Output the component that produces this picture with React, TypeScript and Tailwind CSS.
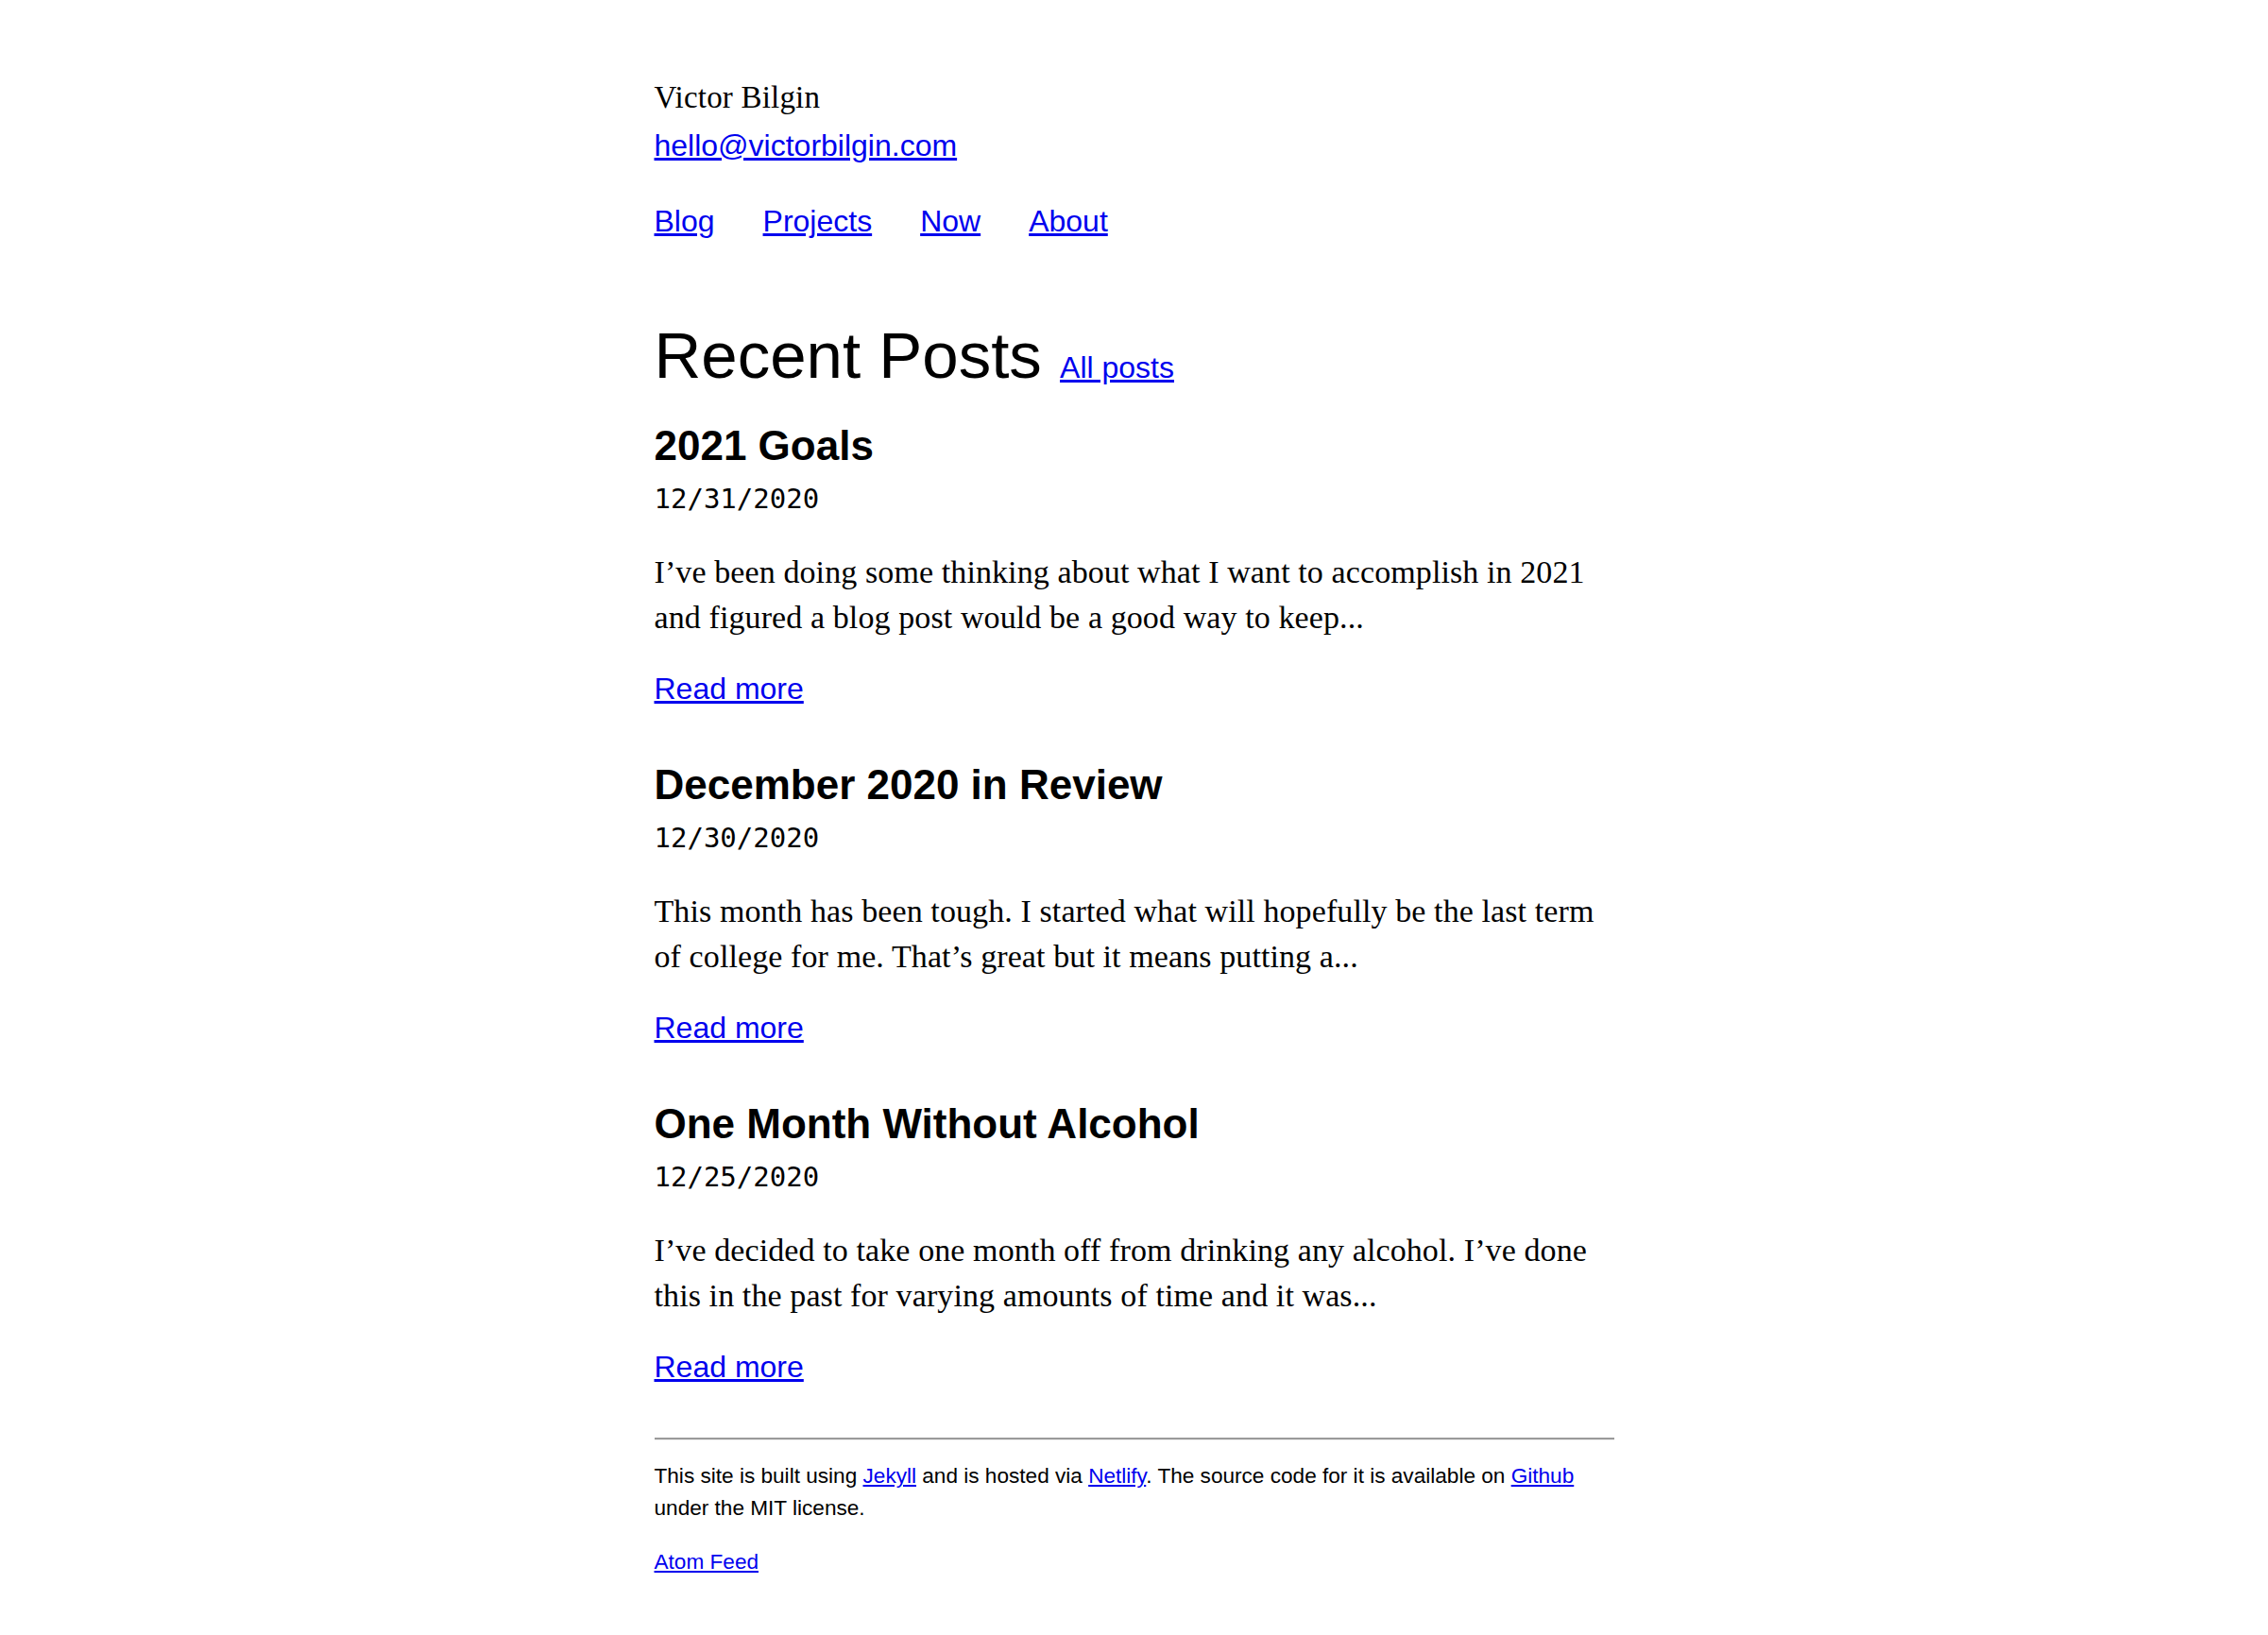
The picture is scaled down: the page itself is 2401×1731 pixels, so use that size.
const serif = "font-['Liberation_Serif',serif]";
const sans = "font-['Liberation_Sans',Arial,sans-serif]";
const mono = "font-['DejaVu_Sans_Mono',monospace]";
const link = "text-[#0000ee] underline";

type Post = { title: string; date: string; excerpt: string };

const posts: Post[] = [
  {
    title: '2021 Goals',
    date: '12/31/2020',
    excerpt:
      'I\u2019ve been doing some thinking about what I want to accomplish in 2021 and figured a blog post would be a good way to keep...',
  },
  {
    title: 'December 2020 in Review',
    date: '12/30/2020',
    excerpt:
      'This month has been tough. I started what will hopefully be the last term of college for me. That\u2019s great but it means putting a...',
  },
  {
    title: 'One Month Without Alcohol',
    date: '12/25/2020',
    excerpt:
      'I\u2019ve decided to take one month off from drinking any alcohol. I\u2019ve done this in the past for varying amounts of time and it was...',
  },
];

function PostPreview({ post }: { post: Post }) {
  return (
    <article>
      <h2 className={`${sans} text-[44px] leading-[52px] font-bold`}>
        <a href="#" className="text-black no-underline">
          {post.title}
        </a>
      </h2>
      <div className={`${mono} mt-[6px] text-[29px] leading-[48px]`}>{post.date}</div>
      <p className={`${serif} mt-[30px] text-[34px] leading-[48px] tracking-[0.1px]`}>{post.excerpt}</p>
      <a href="#" className={`${sans} ${link} mt-[27px] block w-fit text-[32px] leading-[48px]`}>
        Read more
      </a>
    </article>
  );
}

export default function App() {
  return (
    <div className="min-h-screen bg-white text-black">
      <div className="mx-auto w-[1016px] pt-[79px] pb-[60px]">
        <header>
          <div className={`${serif} text-[33px] leading-[48px] tracking-[0.2px]`}>Victor Bilgin</div>
          <a href="#" className={`${sans} ${link} mt-[3px] block w-fit text-[32px] leading-[48px]`}>
            hello@victorbilgin.com
          </a>
          <nav className={`${sans} mt-[32px] flex gap-[51px] text-[32px] leading-[48px]`}>
            <a href="#" className={link}>Blog</a>
            <a href="#" className={link}>Projects</a>
            <a href="#" className={link}>Now</a>
            <a href="#" className={link}>About</a>
          </nav>
        </header>

        <main>
          <h1 className={`${sans} mt-[80px] text-[69px] leading-[78px] font-normal`}>
            Recent Posts{' '}
            <a href="#" className={`${link} text-[32px] leading-[48px]`}>
              All posts
            </a>
          </h1>
          <div className="mt-[30px] flex flex-col gap-[52px]">
            {posts.map((post) => (
              <PostPreview key={post.date} post={post} />
            ))}
          </div>
        </main>

        <footer className={`${sans} mt-[51px] text-[22.6px] leading-[34px]`}>
          <div className="border-t-2 border-b border-t-[#9a9a9a] border-b-[#eeeeee]" />
          <p className="mt-[21px]">
            This site is built using <a href="#" className={link}>Jekyll</a> and is hosted via{' '}
            <a href="#" className={link}>Netlify</a>. The source code for it is available on{' '}
            <a href="#" className={link}>Github</a> under the MIT license.
          </p>
          <a href="#" className={`${link} mt-[23px] block w-fit`}>
            Atom Feed
          </a>
        </footer>
      </div>
    </div>
  );
}
